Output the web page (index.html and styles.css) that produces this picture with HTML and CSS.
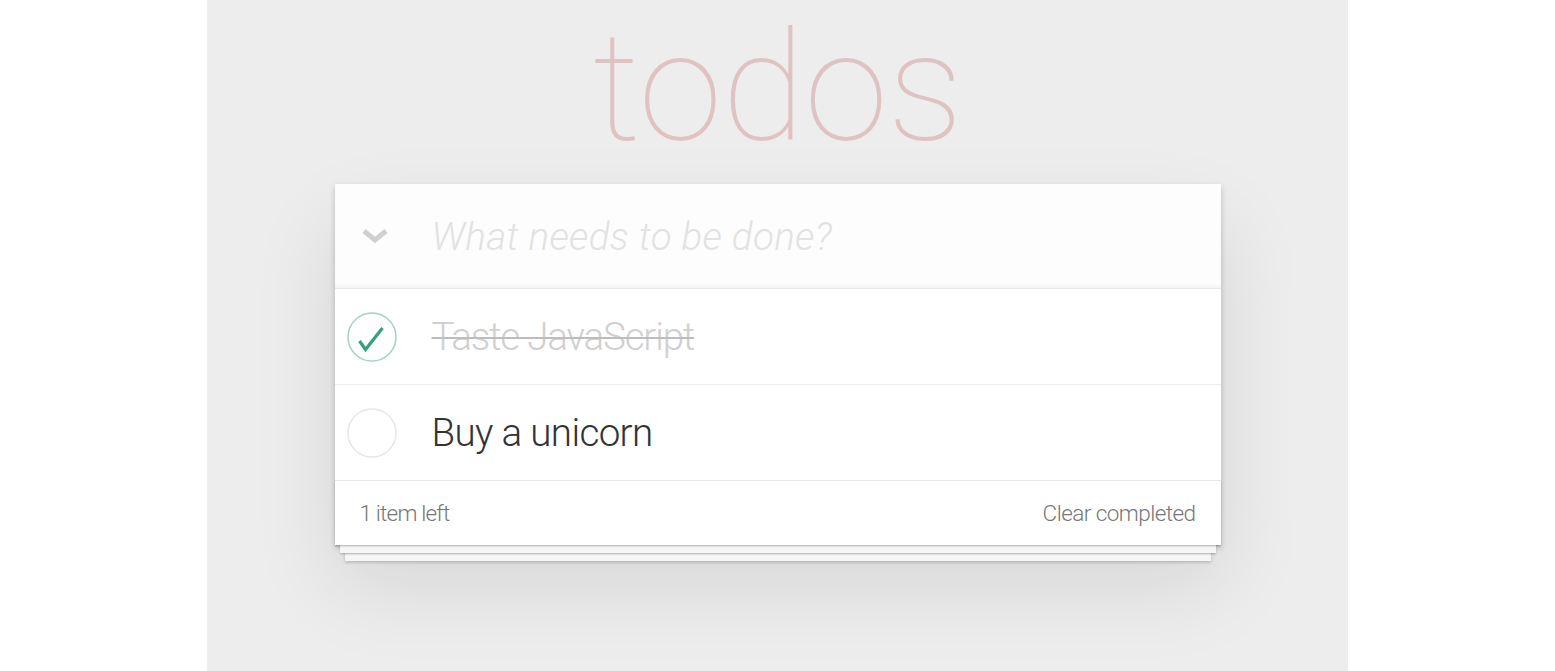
FILE: index.html
```html
<!DOCTYPE html>
<html lang="en">
<head>
<meta charset="utf-8">
<title>todos</title>
<link rel="stylesheet" href="styles.css">
</head>
<body>
<div class="page">
  <h1 class="title">todos</h1>
  <section class="app">
    <header class="header">
      <div class="toggle-all">
        <svg width="28" height="16" viewBox="0 0 28 16"><polyline points="3,3 14,12 25,3" fill="none" stroke="#d0d0d0" stroke-width="5" stroke-linejoin="miter"/></svg>
      </div>
      <div class="new-todo">What needs to be done?</div>
    </header>
    <ul class="list">
      <li class="item completed">
        <div class="toggle">
          <svg width="52" height="52" viewBox="0 0 52 52"><circle cx="26" cy="26" r="24" fill="none" stroke="#a3d3c4" stroke-width="1.5"/><polyline points="13.5,30 19.5,38.5 36.5,17" fill="none" stroke="#34a080" stroke-width="3.2"/></svg>
        </div>
        <span class="label">Taste JavaScript</span>
      </li>
      <li class="item">
        <div class="toggle">
          <svg width="52" height="52" viewBox="0 0 52 52"><circle cx="26" cy="26" r="24" fill="none" stroke="#e6e6e6" stroke-width="1.5"/></svg>
        </div>
        <span class="label">Buy a unicorn</span>
      </li>
    </ul>
    <footer class="footer">
      <span class="count">1 item left</span>
      <span class="clear">Clear completed</span>
    </footer>
  </section>
</div>
</body>
</html>
```
FILE: styles.css
```css
html, body {
  margin: 0;
  padding: 0;
  background: #ffffff;
}
.page {
  width: 1141px;
  margin: 0 auto;
  min-height: 671px;
  background: #ededed;
  overflow: hidden;
  font-family: Roboto, "Liberation Sans", sans-serif;
  font-weight: 300;
}
.title {
  margin: 0;
  height: 176px;
  line-height: 176px;
  font-size: 152px;
  font-weight: 100;
  text-align: center;
  color: #dfc3c3;
  letter-spacing: -0.5px;
}
.app {
  width: 886px;
  margin: 8px auto 0;
  background: #ffffff;
  box-shadow: 0 3px 6px 0 rgba(0, 0, 0, 0.2), 0 40px 80px 0 rgba(0, 0, 0, 0.1);
}
.header {
  height: 104px;
  display: flex;
  align-items: center;
  background: rgba(0, 0, 0, 0.006);
  box-shadow: inset 0 -3px 2px rgba(0, 0, 0, 0.03);
}
.toggle-all {
  width: 97px;
  display: flex;
  box-sizing: border-box;
  padding-left: 26px;
}
.toggle-all svg {
  display: block;
}
.new-todo {
  font-size: 38.6px;
  font-style: italic;
  font-weight: 300;
  color: #e2e2e2;
  letter-spacing: 0.3px;
}
.list {
  list-style: none;
  margin: 0;
  padding: 0;
  border-top: 1px solid #e6e6e6;
}
.item {
  height: 95px;
  display: flex;
  align-items: center;
  border-bottom: 1px solid #ededed;
}
.item:last-child {
  border-bottom: none;
}
.toggle {
  width: 97px;
  padding-left: 11px;
  box-sizing: border-box;
}
.toggle svg {
  display: block;
}
.label {
  font-size: 38.6px;
  color: #333333;
  letter-spacing: -0.65px;
}
.completed .label {
  color: #d0d0d0;
  letter-spacing: -1.2px;
  text-decoration: line-through;
  text-decoration-color: #bdbdbd;
  text-decoration-thickness: 2px;
}
.footer {
  height: 64px;
  border-top: 1px solid #e6e6e6;
  padding: 0 25px;
  display: flex;
  align-items: center;
  justify-content: space-between;
  font-size: 22.5px;
  color: #777777;
  box-shadow: 0 1.6px 1.6px rgba(0, 0, 0, 0.2),
    0 13px 0 -5px #f6f6f6,
    0 14.5px 1.6px -5px rgba(0, 0, 0, 0.2),
    0 26px 0 -10px #f6f6f6,
    0 27.5px 3px -10px rgba(0, 0, 0, 0.2);
}
.count {
  letter-spacing: -0.8px;
}
.clear {
  letter-spacing: -0.55px;
}
```
